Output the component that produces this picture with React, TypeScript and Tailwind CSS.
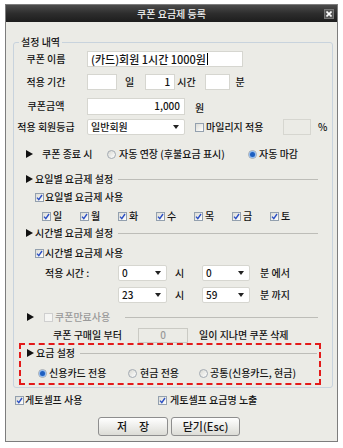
import React from "react";

const days = ["일", "월", "화", "수", "목", "금", "토"];

function Triangle() {
  return (
    <svg width="7" height="8" viewBox="0 0 7 8" className="shrink-0">
      <polygon points="0,0 7,4 0,8" fill="#111" />
    </svg>
  );
}

function CheckBox({ checked = false, disabled = false }: { checked?: boolean; disabled?: boolean }) {
  return (
    <span
      className={
        disabled
          ? "flex h-[9px] w-[9px] shrink-0 items-center justify-center border border-[#cfcfcf] bg-[#f5f5f3]"
          : "flex h-[9px] w-[9px] shrink-0 items-center justify-center border border-[#93a0ae] bg-linear-to-br from-[#dcdcd6] to-white"
      }
    >
      {checked && (
        <svg width="7" height="7" viewBox="0 0 7 7">
          <path d="M1 3.6 L2.8 5.6 L6 1" stroke="#2b4fc4" strokeWidth="1.4" fill="none" />
        </svg>
      )}
    </span>
  );
}

function Radio({ checked = false }: { checked?: boolean }) {
  return (
    <span className="flex h-[9px] w-[9px] shrink-0 items-center justify-center rounded-full border border-[#a3aab2] bg-linear-to-br from-[#d8d8d2] to-white">
      {checked && <span className="h-[5px] w-[5px] rounded-full bg-[#1f5fc0] ring-1 ring-[#8fbaf0]" />}
    </span>
  );
}

function Select({ value, width }: { value: string; width: string }) {
  return (
    <div className={`flex h-[16px] ${width} items-center justify-between rounded-[2px] border border-[#d6d6d0] bg-white pl-[3px] pr-[5px]`}>
      <span>{value}</span>
      <svg width="6" height="4" viewBox="0 0 6 4">
        <polygon points="0,0 6,0 3,4" fill="#222" />
      </svg>
    </div>
  );
}

function Section({ title }: { title: string }) {
  return (
    <div className="flex h-[16px] items-center pl-[12px]">
      <Triangle />
      <span className="ml-[2px]">{title}</span>
      <div className="ml-[5px] mr-[14px] h-px flex-1 bg-[#bdbdb8]" />
    </div>
  );
}

function Label({ text }: { text: string }) {
  return <span className="w-[64px] text-center">{text}</span>;
}

export default function App() {
  return (
    <div className="min-h-[448px] w-[343px] bg-white pl-[5px] pt-[4px] font-['Noto_Sans_CJK_KR',sans-serif] text-[10px] font-medium leading-none text-[#141414]">
      <div className="flex h-[438px] w-[333px] flex-col border border-[#7d7d7d] bg-[#ebebe6]">
        {/* title bar */}
        <div className="grid h-[17px] grid-cols-[1fr_auto_1fr] items-center bg-linear-to-b from-[#4c4c4c] via-[#2d2d2d] to-[#1d1d1d]">
          <span />
          <span className="text-[10px] text-[#f2f2f2]">쿠폰 요금제 등록</span>
          <span className="mr-[3px] flex h-[10px] w-[10px] items-center justify-center justify-self-end border border-[#777] bg-[#555]">
            <svg width="6" height="6" viewBox="0 0 6 6">
              <path d="M0.5 0.5 L5.5 5.5 M5.5 0.5 L0.5 5.5" stroke="#fff" strokeWidth="1.6" />
            </svg>
          </span>
        </div>

        {/* 설정 내역 */}
        <div className="relative ml-[7px] mt-[20px] w-[320px] rounded-[3px] border border-[#c8d3dd]">
          <span className="absolute -top-[6px] left-[5px] bg-[#ebebe6] px-[2px]">설정 내역</span>

          <div className="mt-[8px] flex h-[16px] items-center">
            <Label text="쿠폰 이름" />
            <div className="ml-[9px] flex h-[16px] w-[156px] items-center border border-[#d6d6d0] bg-white px-[3px] text-[11px]">
              (카드)회원 1시간 1000원
              <span className="ml-px h-[12px] w-px bg-black" />
            </div>
          </div>

          <div className="mt-[7px] flex h-[16px] items-center">
            <Label text="적용 기간" />
            <div className="ml-[9px] h-[16px] w-[30px] border border-[#d6d6d0] bg-white" />
            <span className="ml-[8px]">일</span>
            <div className="ml-[11px] flex h-[16px] w-[30px] items-center justify-end border border-[#d6d6d0] bg-white pr-[4px]">1</div>
            <span className="ml-[2px]">시간</span>
            <div className="ml-[9px] h-[16px] w-[25px] border border-[#d6d6d0] bg-white" />
            <span className="ml-[6px]">분</span>
          </div>

          <div className="mt-[8px] flex h-[16px] items-center">
            <Label text="쿠폰금액" />
            <div className="ml-[9px] flex h-[17px] w-[98px] items-center justify-end border border-[#d6d6d0] bg-white pr-[4px]">1,000</div>
            <span className="ml-[10px] mt-[4px]">원</span>
          </div>

          <div className="mt-[5px] flex h-[16px] items-center">
            <Label text="적용 회원등급" />
            <div className="ml-[9px]">
              <Select value="일반회원" width="w-[98px]" />
            </div>
            <span className="ml-[10px]">
              <CheckBox />
            </span>
            <span className="ml-[2px] w-[62px]">마일리지 적용</span>
            <div className="ml-[15px] h-[16px] w-[28px] border border-[#d6d6d0] bg-[#ebebe6]" />
            <span className="ml-[7px]">%</span>
          </div>

          <div className="mt-[11px] flex h-[16px] items-center pl-[12px]">
            <Triangle />
            <span className="ml-[9px] w-[65px]">쿠폰 종료 시</span>
            <div className="flex w-[141px] items-center">
              <Radio />
              <span className="ml-[3px]">자동 연장 (후불요금 표시)</span>
            </div>
            <Radio checked />
            <span className="ml-[2px]">자동 마감</span>
          </div>

          <div className="mt-[9px]">
            <Section title="요일별 요금제 설정" />
          </div>

          <div className="mt-[2px] flex h-[16px] items-center pl-[21px]">
            <CheckBox checked />
            <span className="ml-[1px]">요일별 요금제 사용</span>
          </div>

          <div className="mt-[3px] flex h-[16px] items-center pl-[28px]">
            {days.map((d) => (
              <div key={d} className="flex w-[38px] items-center">
                <CheckBox checked />
                <span className="ml-[2px]">{d}</span>
              </div>
            ))}
          </div>

          <div className="mt-[1px]">
            <Section title="시간별 요금제 설정" />
          </div>

          <div className="mt-[4px] flex h-[16px] items-center pl-[21px]">
            <CheckBox checked />
            <span className="ml-[1px]">시간별 요금제 사용</span>
          </div>

          <div className="mt-[4px] flex h-[16px] items-center pl-[31px]">
            <span className="w-[73px]">적용 시간 :</span>
            <Select value="0" width="w-[49px]" />
            <span className="w-[35px] pl-[8px]">시</span>
            <Select value="0" width="w-[48px]" />
            <span className="ml-[10px]">분 에서</span>
          </div>

          <div className="mt-[6px] flex h-[16px] items-center pl-[104px]">
            <Select value="23" width="w-[49px]" />
            <span className="w-[35px] pl-[8px]">시</span>
            <Select value="59" width="w-[48px]" />
            <span className="ml-[10px]">분 까지</span>
          </div>

          <div className="mt-[6px] flex h-[16px] items-center pl-[13px]">
            <Triangle />
            <span className="ml-[10px]">
              <CheckBox disabled />
            </span>
            <span className="ml-[2px] text-[#9a9a9a]">쿠폰만료사용</span>
            <div className="ml-[15px] mr-[14px] h-px flex-1 bg-[#bdbdb8]" />
          </div>

          <div className="mt-[2px] flex h-[16px] items-center pl-[39px]">
            <span className="w-[85px]">쿠폰 구매일 부터</span>
            <div className="flex h-[15px] w-[50px] items-center justify-center border border-[#cacac4] bg-[#ebebe6] text-[#9a9a9a]">0</div>
            <span className="ml-[11px]">일이 지나면 쿠폰 삭제</span>
          </div>

          {/* 요금 설정 */}
          <div className="mb-[2px] ml-[5px] w-[302px] border-2 border-dashed border-[#e31a1a] pb-[2px]">
            <div className="flex h-[16px] items-center pl-[6px]">
              <Triangle />
              <span className="ml-[2px]">요금 설정</span>
              <div className="ml-[5px] mr-[2px] h-px flex-1 bg-[#bdbdb8]" />
            </div>
            <div className="mt-[4px] flex h-[16px] items-center pl-[17px]">
              <div className="flex w-[90px] items-center">
                <Radio checked />
                <span className="ml-[2px]">신용카드 전용</span>
              </div>
              <div className="flex w-[71px] items-center">
                <Radio />
                <span className="ml-[3px]">현금 전용</span>
              </div>
              <div className="flex items-center">
                <Radio />
                <span className="ml-[2px]">공통(신용카드, 현금)</span>
              </div>
            </div>
          </div>
        </div>

        <div className="mt-[4px] flex h-[16px] items-center pl-[9px]">
          <div className="flex w-[143px] items-center">
            <CheckBox checked />
            <span className="ml-[1px]">게토셀프 사용</span>
          </div>
          <CheckBox checked />
          <span className="ml-[3px]">게토셀프 요금명 노출</span>
        </div>

        <div className="mt-[9px] flex pl-[92px]">
          <button className="flex h-[19px] w-[70px] items-center justify-center gap-[12px] rounded-[3px] border border-[#8e8e8e] bg-linear-to-b from-white to-[#dcdcd6] text-[11px]">
            <span>저</span>
            <span>장</span>
          </button>
          <button className="ml-[3px] flex h-[19px] w-[69px] items-center justify-center rounded-[3px] border border-[#8e8e8e] bg-linear-to-b from-white to-[#dcdcd6] text-[11px]">
            닫기(Esc)
          </button>
        </div>
      </div>
    </div>
  );
}
